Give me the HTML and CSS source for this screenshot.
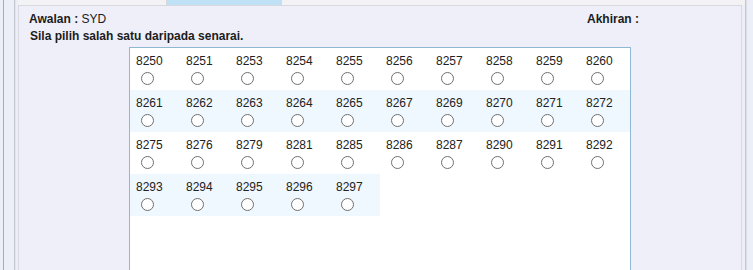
FILE: index.html
```html
<!DOCTYPE html>
<html lang="ms">
<head>
    <meta charset="UTF-8">
    <title>Pilih Nombor</title>
    <link rel="stylesheet" href="styles.css">
</head>
<body>
    <div class="outer">
        <div class="frame">
            <div class="tabs">
                <div class="tab"></div>
                <div class="tab active"></div>
                <div class="tab rest"></div>
            </div>
            <div class="panel">
                <div class="info">
                    <div class="awalan"><b>Awalan :</b> SYD</div>
                    <div class="akhiran"><b>Akhiran :</b></div>
                </div>
                <div class="prompt">Sila pilih salah satu daripada senarai.</div>

                <div class="listbox">
                    <table class="numbers">
                        <tr>
                            <td>8250<br><input type="radio" name="no" value="8250"></td>
                            <td>8251<br><input type="radio" name="no" value="8251"></td>
                            <td>8253<br><input type="radio" name="no" value="8253"></td>
                            <td>8254<br><input type="radio" name="no" value="8254"></td>
                            <td>8255<br><input type="radio" name="no" value="8255"></td>
                            <td>8256<br><input type="radio" name="no" value="8256"></td>
                            <td>8257<br><input type="radio" name="no" value="8257"></td>
                            <td>8258<br><input type="radio" name="no" value="8258"></td>
                            <td>8259<br><input type="radio" name="no" value="8259"></td>
                            <td>8260<br><input type="radio" name="no" value="8260"></td>
                        </tr>
                        <tr>
                            <td>8261<br><input type="radio" name="no" value="8261"></td>
                            <td>8262<br><input type="radio" name="no" value="8262"></td>
                            <td>8263<br><input type="radio" name="no" value="8263"></td>
                            <td>8264<br><input type="radio" name="no" value="8264"></td>
                            <td>8265<br><input type="radio" name="no" value="8265"></td>
                            <td>8267<br><input type="radio" name="no" value="8267"></td>
                            <td>8269<br><input type="radio" name="no" value="8269"></td>
                            <td>8270<br><input type="radio" name="no" value="8270"></td>
                            <td>8271<br><input type="radio" name="no" value="8271"></td>
                            <td>8272<br><input type="radio" name="no" value="8272"></td>
                        </tr>
                        <tr>
                            <td>8275<br><input type="radio" name="no" value="8275"></td>
                            <td>8276<br><input type="radio" name="no" value="8276"></td>
                            <td>8279<br><input type="radio" name="no" value="8279"></td>
                            <td>8281<br><input type="radio" name="no" value="8281"></td>
                            <td>8285<br><input type="radio" name="no" value="8285"></td>
                            <td>8286<br><input type="radio" name="no" value="8286"></td>
                            <td>8287<br><input type="radio" name="no" value="8287"></td>
                            <td>8290<br><input type="radio" name="no" value="8290"></td>
                            <td>8291<br><input type="radio" name="no" value="8291"></td>
                            <td>8292<br><input type="radio" name="no" value="8292"></td>
                        </tr>
                        <tr>
                            <td>8293<br><input type="radio" name="no" value="8293"></td>
                            <td>8294<br><input type="radio" name="no" value="8294"></td>
                            <td>8295<br><input type="radio" name="no" value="8295"></td>
                            <td>8296<br><input type="radio" name="no" value="8296"></td>
                            <td>8297<br><input type="radio" name="no" value="8297"></td>
                        </tr>
                    </table>
                </div>
            </div>
        </div>
    </div>
</body>
</html>
```

FILE: styles.css
```css
html, body {
    margin: 0;
    padding: 0;
    height: 100%;
    overflow: hidden;
}
body {
    font-family: "Liberation Sans", Arial, sans-serif;
    font-size: 12px;
    color: #1c1c1c;
    background-color: #eceef8;
}
.outer {
    margin-left: 3px;
    border-left: 1px solid #8db3d6;
    height: 100%;
    padding-left: 10px;
}
.frame {
    width: 730px;
    height: 100%;
    border-left: 1px solid #c6c6ce;
    border-right: 1px solid #c6c6ce;
    box-shadow: inset 1px 0 0 #e4e4ea, 1px 0 0 #dedee6;
}
.tabs {
    display: flex;
    height: 5px;
    padding-left: 3px;
}
.tab {
    width: 148px;
    background-color: #f3f3f6;
    border-right: 1px solid #d6d6dc;
}
.tab.active {
    width: 114px;
    background-color: #bfe1f5;
    border-right: 1px solid #c8dcea;
}
.tab.rest {
    flex: 1;
    border-right: none;
}
.panel {
    box-sizing: border-box;
    margin-left: 3px;
    width: 724px;
    height: calc(100% - 5px);
    border: 1px solid #d8d8de;
    border-bottom: none;
    background-color: #eeeff8;
    padding-top: 5px;
}
.info {
    display: flex;
    line-height: 17px;
    padding-left: 10px;
}
.awalan {
    width: 558px;
}
.prompt {
    font-weight: bold;
    line-height: 17px;
    padding-left: 11px;
}
.listbox {
    width: 500px;
    height: 222px;
    margin: 2px auto 0;
    border: 1px solid #8fb8d2;
    border-bottom: none;
    background-color: #fff;
}
.numbers {
    width: 500px;
    table-layout: fixed;
    border-collapse: collapse;
    border-spacing: 0;
}
.numbers tr {
    height: 42px;
}
.numbers tr:nth-child(even) td {
    background-color: #f0f8ff;
}
.numbers td {
    width: 44px;
    padding: 6px 0 0 6px;
    vertical-align: top;
    color: #222;
    line-height: normal;
}
.numbers input {
    appearance: none;
    -webkit-appearance: none;
    box-sizing: border-box;
    width: 13px;
    height: 13px;
    margin: 4px 3px 0 5px;
    border: 1.5px solid #707070;
    border-radius: 50%;
    background-color: #fff;
    vertical-align: -2px;
}
```
